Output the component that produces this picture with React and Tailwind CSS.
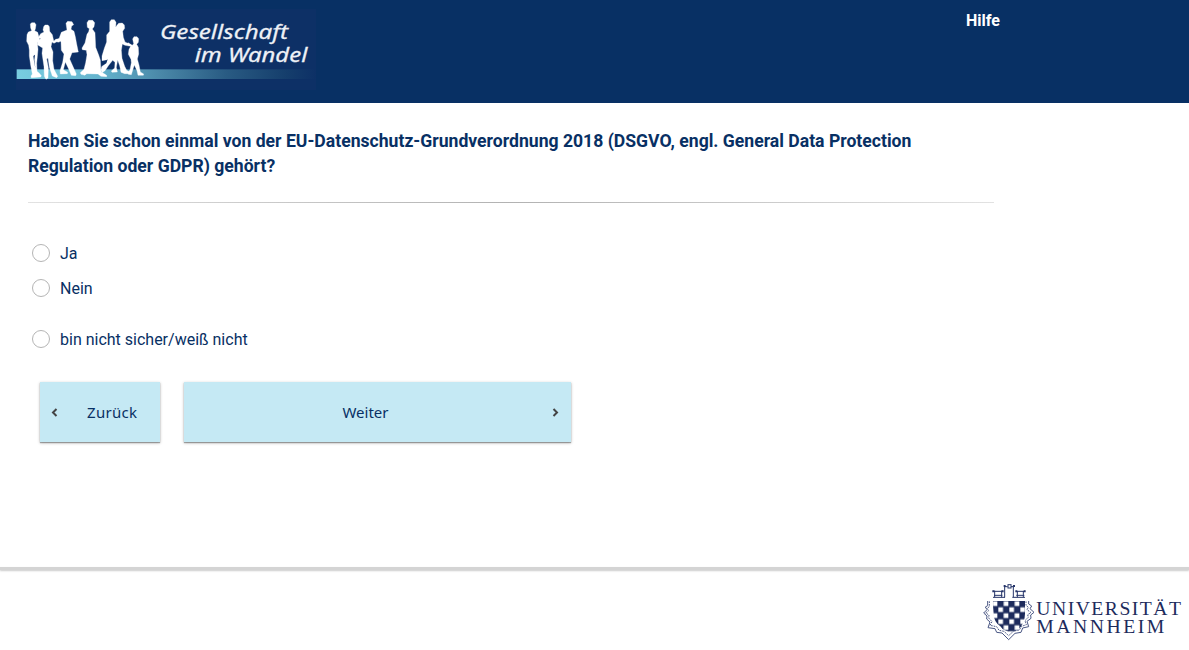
import React from 'react';

function SocietyLogo() {
  return (
    <svg className="block h-[81px] w-[300px] shrink-0" viewBox="48 27 900 243" role="img" aria-label="Gesellschaft im Wandel">
      <defs>
        <linearGradient id="stripe" x1="0" x2="1" y1="0" y2="0">
          <stop offset="0" stopColor="#78cde0" />
          <stop offset="0.28" stopColor="#64b3cd" />
          <stop offset="0.48" stopColor="#4a88a8" />
          <stop offset="0.7" stopColor="#295b83" />
          <stop offset="0.9" stopColor="#153e6c" />
          <stop offset="1" stopColor="#0d3066" />
        </linearGradient>
      </defs>
      <rect x="48" y="27" width="900" height="243" fill="#0d3066" />
      <rect x="50" y="208" width="898" height="29" fill="url(#stripe)" />
      <g fill="#fff" stroke="#fff" strokeWidth="1" strokeLinejoin="round">
        {/* man on the left */}
        <path d="M91 72L95 68H104L108 74L106 87L104 92L113 97L116 108L118 118L112 128L114 148L112 170L110 190L111 214L118 220L124 227L122 231L94 233L93 228L97 222L92 196L88 168V150L86 136L80 124L81 104L85 96L95 92L92 84Z" />
        {/* woman with raised arm */}
        <path d="M131 80L135 75H144L148 80L149 94L157 104L161 122L177 116L180 120L162 130L156 126L153 140L159 156L158 182L162 208L173 229L170 233L157 228L148 202L144 174L140 177L145 203L144 234L138 238L133 229L132 200L126 160L128 144L112 134V120L124 116L114 114L122 101L132 96L129 90Z" />
        {/* man with cap and coat */}
        <path d="M198 70L203 64L216 65L221 74L215 78L213 88L222 94L226 110L230 132L235 156L216 158L209 177L216 193L229 222L227 227L214 226L206 207L196 186L190 209L203 217L202 221L181 222L180 212L188 187L192 162L184 151L183 124L174 127L165 121L167 118L177 116L184 97L201 90Z" />
        {/* woman with long skirt */}
        <path d="M261 68L266 61L278 61L284 68L282 80L277 87L285 98L286 120L287 142L296 165L301 180L303 215L320 226V230L303 229L294 222L260 221L255 226L243 223L241 218L252 208L257 188L261 164L259 151L247 149L246 144L255 129L261 103L266 95L268 86L262 82Z" />
        {/* couple walking together */}
        <path d="M329 66L334 59H343L348 67L347 82L351 76L356 70L367 69L373 75L374 85L368 94L370 112L375 126L392 134L392 139L375 136L367 132L364 151L366 175L374 199L380 211L390 216L388 221L374 221L363 217L359 197L353 180L349 202L352 216L336 217L334 213L344 204L345 187L338 181L326 196L315 212L306 218L303 210L305 200L318 188L322 179L306 182V168L313 145L320 126L320 105L329 94Z" />
        {/* child */}
        <path d="M398 117L402 110L411 110L416 116L415 127L410 133L415 142L416 162L412 177L417 195L421 216L431 222L430 226L414 226L411 212L403 195L398 211L394 224L385 223L384 218L390 209L394 188L393 178L385 163L387 148L392 139L382 132L384 128L397 136L401 131Z" />
      </g>
      <path d="M307 197L316 184L323 178L319 190Z" fill="#0d3066" />
      <path d="M105 164L103 180L106 204L102 184L100 168Z" fill="#0d3066" />
      <g fill="#eef1f6" stroke="#eef1f6" strokeWidth="0.8" fontFamily="'Noto Sans', 'Open Sans', sans-serif" fontStyle="italic">
        <text x="480" y="118" fontSize="62" textLength="384" lengthAdjust="spacingAndGlyphs">Gesellschaft</text>
        <text x="584" y="186" fontSize="62" textLength="338" lengthAdjust="spacingAndGlyphs">im Wandel</text>
      </g>
    </svg>
  );
}

function UniversityLogo() {
  return (
    <svg className="block h-[64px] w-[210px]" viewBox="0 0 630 192" role="img" aria-label="Universität Mannheim">
      <defs>
        <clipPath id="shield">
          <path d="M53 69h97v38q-1 25-13 40-13 15-29 14-22 0-32-16-19-12-20-37z" />
        </clipPath>
        <pattern id="checks" x="52" y="68" width="33" height="36" patternUnits="userSpaceOnUse">
          <rect width="33" height="36" fill="#1d2b5c" />
          <rect x="1" y="2" width="14" height="14" fill="#fff" />
          <rect x="18" y="20" width="14" height="14" fill="#fff" />
        </pattern>
      </defs>
      <g fill="none" stroke="#27366a" strokeWidth="3">
        <path d="M54 58h36M59 38v20M80 38v20M54 40h29M57 52h25M89 24v34M89 26h9M108 26h9M115 24v34M112 58h38M124 40h26M127 39v19M145 39v19M124 52h24" />
        <rect x="99" y="20" width="9" height="10" />
      </g>
      <g fill="#27366a">
        <path d="M52 37h6v6h-6zM80 37h6v6h-6zM86 21h6v6h-6zM114 21h6v6h-6zM121 37h6v6h-6zM146 37h6v6h-6z" />
      </g>
      <rect x="53" y="69" width="97" height="94" fill="url(#checks)" clipPath="url(#shield)" />
      <g fill="none" stroke="#4a5784" strokeWidth="3">
        <path d="M38 69v14l-7 4 5 8-10 10 10 9-1 9 10 9-6 17 21 3 5 11 16 2 20 20 19-19 18-3 5-13 18-4-5-16 12-9-1-10 10-8-12-11 5-8-9-6V69" />
        <path strokeDasharray="5 3" d="M43 70v16l-7 5 5 7-9 7 10 6-1 9 10 11-6 11 20 4 7 11 15 3 14 13 15-14 17-3 7-11 14-5-4-12 10-10-2-8 10-6-12-9 4-7-7-6V70" />
      </g>
      <g fill="#1d2b5c" fontFamily="'Liberation Serif', serif">
        <text x="184" y="111" fontSize="59" textLength="434">UNIVERSITÄT</text>
        <text x="184" y="166" fontSize="59" textLength="384">MANNHEIM</text>
      </g>
    </svg>
  );
}

function Option({ label }) {
  return (
    <label className="flex h-[35px] items-center gap-[10px] text-base text-[#083064]">
      <input type="radio" name="answer" className="mb-px size-[18px] appearance-none rounded-full border border-[#b5b5b5] bg-white" />
      <span>{label}</span>
    </label>
  );
}

function Chevron({ d }) {
  return (
    <svg className="h-[9px] w-[7px]" viewBox="0 0 7 9" fill="none" stroke="#444" strokeWidth="2">
      <path d={d} />
    </svg>
  );
}

export default function App() {
  return (
    <div className="flex h-[650px] flex-col overflow-hidden bg-white font-['Roboto',sans-serif]">
      <header className="flex h-[103px] shrink-0 items-start bg-[#083064] pt-[9px] pl-4">
        <SocietyLogo />
        <a className="ml-[650px] pt-px text-base font-bold leading-[22px] text-white">Hilfe</a>
      </header>
      <main className="flex h-[464px] shrink-0 flex-col pl-7 pt-[26px]">
        <h1 className="w-[930px] text-[17.6px] font-bold leading-[25px] text-[#083064]">
          Haben Sie schon einmal von der EU-Datenschutz-Grundverordnung 2018 (DSGVO, engl. General Data Protection<br />
          Regulation oder GDPR) gehört?
        </h1>
        <div className="mt-[23px] h-px w-[966px] bg-linear-to-r from-[#e2e2e2] via-[#b2b2b2] to-[#e2e2e2]" />
        <div className="mt-[33px] pl-1">
          <Option label="Ja" />
          <Option label="Nein" />
          <div className="mt-4">
            <Option label="bin nicht sicher/weiß nicht" />
          </div>
        </div>
        <div className="mt-[25px] flex gap-6 pl-3 font-['Noto_Sans',sans-serif] text-[15px] text-[#083064]">
          <button className="flex h-[60px] w-[120px] items-center bg-[#c5e9f4] pl-[11px] shadow-[0_1px_1px_rgba(0,0,0,0.3),0_1px_3px_rgba(0,0,0,0.25)]">
            <Chevron d="M5.5 1 2 4.5 5.5 8" />
            <span className="ml-[29px] tracking-[0.3px]">Zurück</span>
          </button>
          <button className="flex h-[60px] w-[387px] items-center bg-[#c5e9f4] pr-3 shadow-[0_1px_1px_rgba(0,0,0,0.3),0_1px_3px_rgba(0,0,0,0.25)]">
            <span className="flex-1 pr-[5px] text-center">Weiter</span>
            <Chevron d="M1.5 1 5 4.5 1.5 8" />
          </button>
        </div>
      </main>
      <footer className="flex flex-1 flex-col">
        <div className="h-[3px] bg-[#d4d4d4] shadow-[0_1px_2px_#ccc]" />
        <div className="flex justify-end pr-1 pt-2">
          <UniversityLogo />
        </div>
      </footer>
    </div>
  );
}
